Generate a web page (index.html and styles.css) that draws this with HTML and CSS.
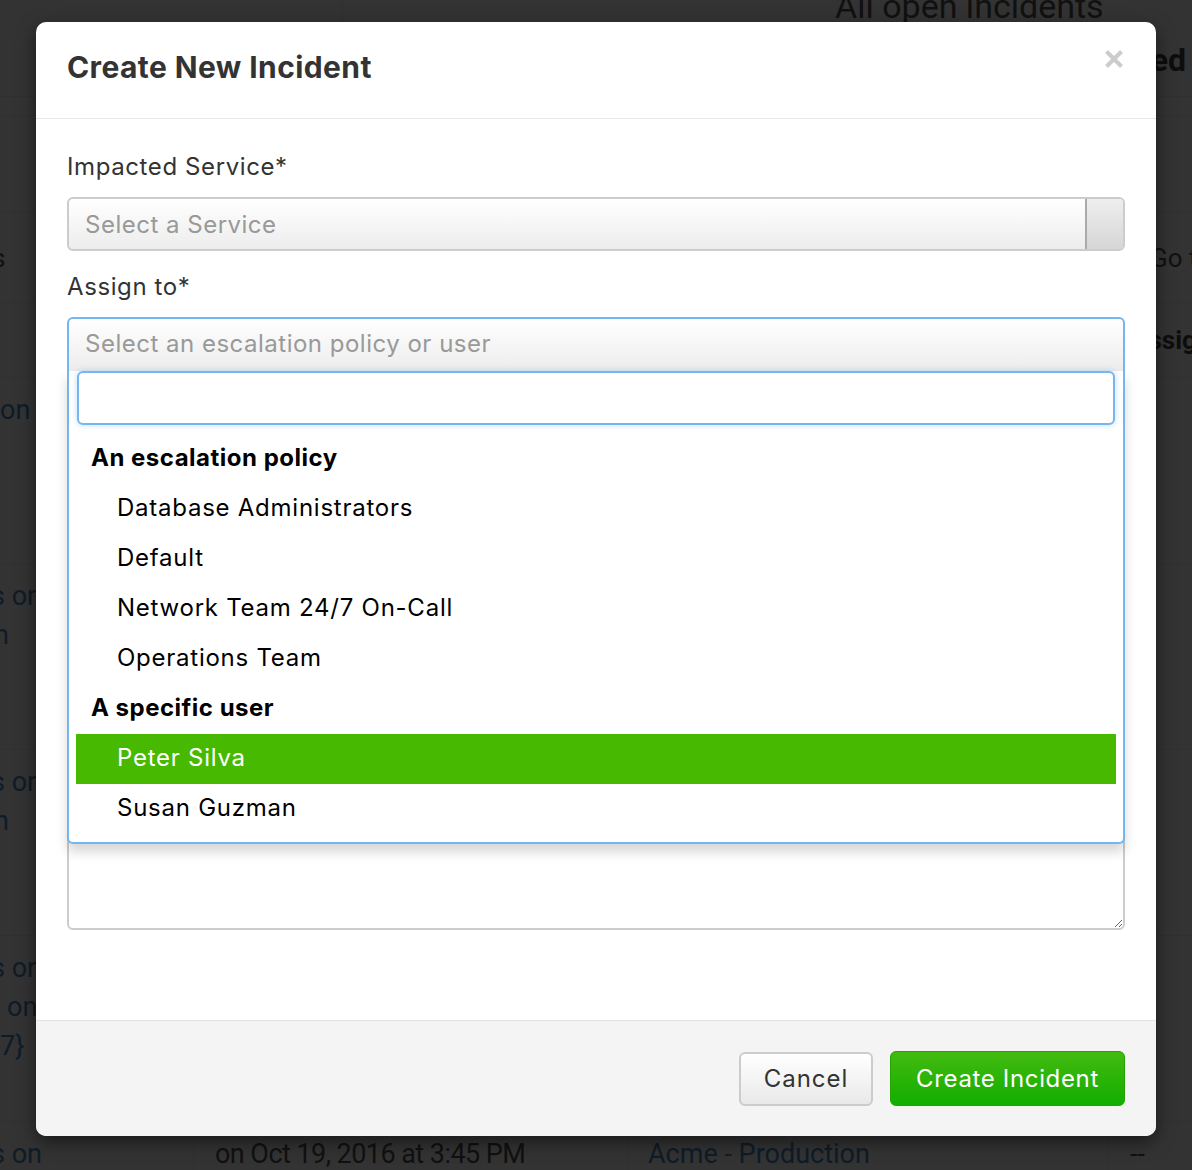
FILE: index.html
```html
<!DOCTYPE html>
<html lang="en">
<head>
<meta charset="utf-8">
<title>Create New Incident</title>
<link rel="stylesheet" href="styles.css">
</head>
<body>
<div class="page">
  <div class="page-head">
    <div class="ph-left"></div>
    <div class="ph-right">
      <div class="page-title">All open incidents</div>
      <div class="page-tab">Acknowledged</div>
    </div>
  </div>
  <div class="strip"></div>
  <div class="filters"></div>
  <div class="toolbar">
    <span class="tb-left">s</span>
    <span class="tb-right">Go to</span>
  </div>
  <div class="thead">
    <span class="th c0"></span>
    <span class="th c1"></span>
    <span class="th c2"></span>
    <span class="th c3">Assigned To</span>
  </div>
  <div class="trow">
    <div class="cell c0"><span class="lnk">on</span></div>
    <div class="cell c1"></div><div class="cell c2"></div><div class="cell c3"></div>
  </div>
  <div class="trow">
    <div class="cell c0"><span class="lnk sh">s on</span><span class="lnk shn">n</span></div>
    <div class="cell c1"></div><div class="cell c2"></div><div class="cell c3"></div>
  </div>
  <div class="trow">
    <div class="cell c0"><span class="lnk sh">s on</span><span class="lnk shn">n</span></div>
    <div class="cell c1"></div><div class="cell c2"></div><div class="cell c3"></div>
  </div>
  <div class="trow">
    <div class="cell c0"><span class="lnk sh">s on</span><span class="lnk ind">on</span><span class="lnk">7}</span></div>
    <div class="cell c1"></div><div class="cell c2"></div><div class="cell c3"></div>
  </div>
  <div class="trow last">
    <div class="cell c0"><span class="lnk sh">s on</span></div>
    <div class="cell c1"><span>on Oct 19, 2016 at 3:45 PM</span></div>
    <div class="cell c2"><span class="lnk">Acme - Production</span></div>
    <div class="cell c3"><span>--</span></div>
  </div>
</div>

<div class="backdrop"></div>

<div class="modal">
  <div class="modal-header">
    <h2 class="modal-title">Create New Incident</h2>
    <button class="close" aria-label="Close">
      <svg width="20" height="20" viewBox="0 0 20 20"><path d="M2.5 2.5 L17.5 17.5 M17.5 2.5 L2.5 17.5" stroke="#cccccc" stroke-width="4.2" fill="none"/></svg>
    </button>
  </div>
  <div class="modal-body">
    <div class="field">
      <label class="label">Impacted Service*</label>
      <div class="select">
        <span class="placeholder">Select a Service</span>
        <span class="select-arrow"></span>
      </div>
    </div>
    <div class="field">
      <label class="label">Assign to*</label>
      <div class="s2">
        <div class="s2-choice"><span class="placeholder">Select an escalation policy or user</span></div>
        <div class="s2-drop">
          <div class="s2-search"><input class="s2-input" type="text"></div>
          <ul class="s2-results">
            <li class="s2-group">An escalation policy</li>
            <li class="s2-item">Database Administrators</li>
            <li class="s2-item">Default</li>
            <li class="s2-item">Network Team 24/7 On-Call</li>
            <li class="s2-item">Operations Team</li>
            <li class="s2-group">A specific user</li>
            <li class="s2-item active">Peter Silva</li>
            <li class="s2-item">Susan Guzman</li>
          </ul>
        </div>
      </div>
    </div>
    <div class="field">
      <label class="label">Description</label>
      <textarea class="textarea"></textarea>
    </div>
  </div>
  <div class="modal-footer">
    <button class="btn btn-default">Cancel</button>
    <button class="btn btn-primary">Create Incident</button>
  </div>
</div>
</body>
</html>
```

FILE: styles.css
```css
html, body {
  margin: 0;
  padding: 0;
  overflow: hidden;
}
body {
  width: 1192px;
  height: 1170px;
  position: relative;
  background: #ffffff;
  font-family: Roboto, "Liberation Sans", sans-serif;
  color: #555555;
}

/* ---------- background page ---------- */
.page {
  width: 1192px;
  height: 1170px;
  overflow: hidden;
  font-size: 27px;
}
.page-head {
  height: 96px;
  border-bottom: 1px solid #f0f0f0;
  display: grid;
  grid-template-columns: 343px 1fr;
}
.ph-left {
  border-right: 1px solid #f0f0f0;
}
.ph-right {
  overflow: hidden;
}
.page-title {
  margin-top: -14px;
  padding-left: 492px;
  font-size: 34px;
  line-height: 40px;
  color: #555;
}
.page-tab {
  margin-top: 16px;
  text-align: right;
  padding-right: 6px;
  font-size: 32px;
  line-height: 36px;
  font-weight: bold;
  color: #444;
}
.strip {
  height: 18px;
  border-bottom: 1px solid #f0f0f0;
}
.filters {
  height: 96px;
  border-bottom: 1px solid #f0f0f0;
}
.toolbar {
  height: 89px;
  border-bottom: 1px solid #f0f0f0;
  display: flex;
  justify-content: space-between;
  align-items: center;
  font-size: 26px;
}
.tb-left { margin-left: -8px; }
.tb-right { margin-right: -20px; }
.thead {
  height: 74px;
  border-bottom: 1px solid #f0f0f0;
  display: grid;
  grid-template-columns: 193px 434px 480px 1fr;
  align-items: center;
  font-weight: bold;
  font-size: 26px;
  color: #444;
}
.th.c3 { padding-left: 23px; white-space: nowrap; }
.trow {
  height: 185px;
  border-bottom: 1px solid #f0f0f0;
  display: grid;
  grid-template-columns: 193px 434px 480px 1fr;
}
.trow.last {
  height: 48px;
  border-bottom: 0;
}
.cell {
  padding-top: 13px;
  line-height: 39px;
  white-space: nowrap;
  overflow: hidden;
}
.cell span { display: block; }
.c1, .c2, .c3 { border-left: 1px solid #f0f0f0; }
.cell.c1 { padding-left: 21px; letter-spacing: -0.55px; }
.cell.c2 { padding-left: 20px; }
.cell.c3 { padding-left: 22px; }
.lnk { color: #4a8bc9; }
.ind { padding-left: 7px; }
.cell .sh { margin-left: -9px; }
.cell .shn { margin-left: -6px; }

.backdrop {
  position: absolute;
  inset: 0;
  background: rgba(0, 0, 0, 0.8);
}

/* ---------- modal ---------- */
.modal {
  position: absolute;
  left: 36px;
  top: 22px;
  width: 1120px;
  height: 1114px;
  background: #ffffff;
  border-radius: 10px;
  box-shadow: 0 6px 18px rgba(0, 0, 0, 0.5);
  display: flex;
  flex-direction: column;
  font-family: Inter, "Liberation Sans", sans-serif;
  letter-spacing: 0.7px;
}
.modal-header {
  height: 97px;
  box-sizing: border-box;
  flex: none;
  border-bottom: 1px solid #e8e8e8;
  display: flex;
  align-items: center;
  justify-content: space-between;
  padding: 0 32px 7px 31px;
}
.modal-title {
  margin: 0;
  font-size: 30px;
  line-height: 40px;
  font-weight: 700;
  color: #333333;
  letter-spacing: 0.4px;
}
.close {
  border: 0;
  background: none;
  padding: 0;
  margin-top: -16px;
  width: 20px;
  height: 20px;
  display: flex;
}
.modal-body {
  flex: 1;
  padding: 31px 31px 0 31px;
}
.field {
  margin-bottom: 19px;
}
.label {
  display: block;
  font-size: 24px;
  line-height: 34px;
  color: #333333;
  margin-bottom: 13px;
  letter-spacing: 0.6px;
}
.select {
  height: 54px;
  box-sizing: border-box;
  border: 2px solid #cccccc;
  border-radius: 6px;
  background: linear-gradient(#ffffff 0%, #f6f6f6 50%, #ececec 100%);
  display: flex;
  align-items: center;
  justify-content: space-between;
  overflow: hidden;
}
.placeholder {
  padding-left: 16px;
  font-size: 24px;
  color: #999999;
  letter-spacing: 0.5px;
}
.select-arrow {
  align-self: stretch;
  width: 36px;
  border-left: 2px solid #aaaaaa;
  background: linear-gradient(#eeeeee 0%, #d6d6d6 100%);
}

/* select2 open */
.s2 {
  position: relative;
  height: 54px;
  z-index: 2;
}
.s2-choice {
  height: 54px;
  box-sizing: border-box;
  border: 2px solid #74b6ef;
  border-bottom: 0;
  border-radius: 6px 6px 0 0;
  background: linear-gradient(#ffffff 0%, #f2f2f2 70%, #ececec 100%);
  display: flex;
  align-items: center;
  padding-bottom: 4px;
}
.s2-drop {
  position: absolute;
  left: 0;
  right: 0;
  top: 54px;
  box-sizing: border-box;
  border: 2px solid #74b6ef;
  border-top: 0;
  border-radius: 0 0 6px 6px;
  background: #ffffff;
  box-shadow: 0 8px 12px rgba(0, 0, 0, 0.16);
  padding: 0 7px 8px 7px;
}
.s2-search {
  display: flex;
  padding: 0 1px;
}
.s2-input {
  flex: 1;
  height: 54px;
  box-sizing: border-box;
  border: 2px solid #74b6ef;
  border-radius: 6px;
  box-shadow: 0 0 6px rgba(116, 182, 239, 0.45);
  outline: none;
  margin: 0;
  font-size: 24px;
  font-family: Inter, sans-serif;
}
.s2-results {
  list-style: none;
  margin: 9px 0 0 0;
  padding: 0;
}
.s2-group,
.s2-item {
  height: 50px;
  line-height: 48px;
  font-size: 24px;
  color: #000000;
}
.s2-group {
  font-weight: 700;
  padding-left: 15px;
  letter-spacing: 0.5px;
}
.s2-item {
  padding-left: 41px;
  letter-spacing: 0.75px;
}
.s2-item.active {
  background: #46b900;
  color: #ffffff;
}

.textarea {
  display: block;
  width: 100%;
  height: 493px;
  box-sizing: border-box;
  border: 2px solid #cccccc;
  border-radius: 6px;
  resize: vertical;
  margin: 0;
}

.modal-footer {
  height: 115px;
  flex: none;
  border-top: 1px solid #e3e3e3;
  background: #f4f4f4;
  border-radius: 0 0 10px 10px;
  display: flex;
  align-items: center;
  justify-content: flex-end;
  gap: 17px;
  padding: 0 31px;
}
.btn {
  height: 54px;
  box-sizing: border-box;
  border-radius: 6px;
  font-family: Inter, "Liberation Sans", sans-serif;
  font-size: 24px;
  padding: 0;
  margin: 0;
}
.btn-default {
  width: 134px;
  border: 2px solid #cccccc;
  background: linear-gradient(#ffffff 0%, #e9e9e9 100%);
  color: #333333;
  letter-spacing: 1px;
}
.btn-primary {
  width: 235px;
  height: 55px;
  border: 1px solid #24a300;
  background: linear-gradient(#44ba10 0%, #11ae00 100%);
  color: #ffffff;
  letter-spacing: 0.65px;
}
```
